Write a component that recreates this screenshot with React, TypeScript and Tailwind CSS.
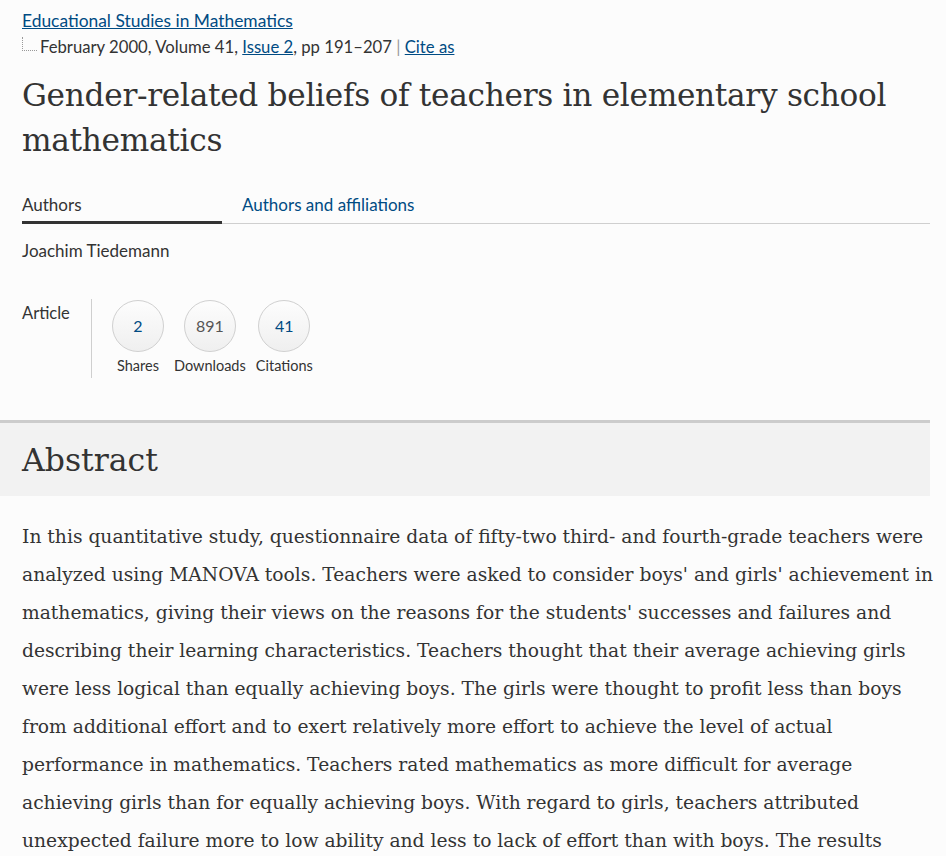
import React from "react";

const sans = "font-['Source_Sans_Pro','Lato','Liberation_Sans',sans-serif]";
const heading = "font-['DejaVu_Serif',serif]";

interface MetricProps {
  value: string;
  label: string;
  link?: boolean;
}

const Metric: React.FC<MetricProps> = ({ value, label, link }) => {
  return (
    <div className="flex flex-col items-center">
      <div
        className={`flex h-[52px] w-[52px] items-center justify-center rounded-full border border-[#d0d0d0] bg-gradient-to-b from-[#fdfdfd] to-[#efefef] text-[16px] ${
          link ? "text-[#004b83]" : "text-[#555]"
        }`}
      >
        {value}
      </div>
      <div className="mt-[5px] text-[14.5px] leading-[18px] text-[#333]">{label}</div>
    </div>
  );
};

const lines = [
  "In this quantitative study, questionnaire data of fifty-two third- and fourth-grade teachers were",
  "analyzed using MANOVA tools. Teachers were asked to consider boys' and girls' achievement in",
  "mathematics, giving their views on the reasons for the students' successes and failures and",
  "describing their learning characteristics. Teachers thought that their average achieving girls",
  "were less logical than equally achieving boys. The girls were thought to profit less than boys",
  "from additional effort and to exert relatively more effort to achieve the level of actual",
  "performance in mathematics. Teachers rated mathematics as more difficult for average",
  "achieving girls than for equally achieving boys. With regard to girls, teachers attributed",
  "unexpected failure more to low ability and less to lack of effort than with boys. The results",
  "suggest that teachers' beliefs differ with regard to gender.",
];

export default function App() {
  return (
    <div className={`min-h-[856px] w-[946px] bg-[#fcfcfc] text-[#333] ${sans}`}>
      <div className="w-[930px]">
        <div className="pl-[22px] pt-[9px]">
          <a href="#" className="text-[17.4px] leading-[24px] text-[#004b83] underline">
            Educational Studies in Mathematics
          </a>
          <div className="mt-[3px] flex items-center text-[16.7px] leading-[22px] text-[#333]">
            <span className="mr-[3px] mb-[6px] inline-block h-[14px] w-[15px] border-b border-l border-dotted border-[#999]" />
            <span>
              February 2000, Volume 41,{" "}
              <a href="#" className="text-[#004b83] underline">
                Issue 2
              </a>
              , pp 191–207 <span className="text-[#999]">|</span>{" "}
              <a href="#" className="text-[#004b83] underline">
                Cite as
              </a>
            </span>
          </div>

          <h1 className={`mt-[15px] text-[31.2px] leading-[45px] tracking-[-0.3px] text-[#333] ${heading}`}>
            Gender-related beliefs of teachers in elementary school
            <br />
            mathematics
          </h1>

          <div className="mt-[30px] flex border-b border-[#cfcfcf]">
            <div className="-mb-px w-[200px] border-b-[3px] border-[#333] pb-[4px] text-[17px] leading-[24px] text-[#333]">
              Authors
            </div>
            <div className="ml-[20px] text-[17px] leading-[24px] text-[#004b83]">Authors and affiliations</div>
          </div>

          <div className="mt-[15px] text-[17px] leading-[24px] text-[#333]">Joachim Tiedemann</div>

          <div className="mt-[36px] flex">
            <div className="w-[69px] pt-[3px] text-[16.5px] leading-[22px] text-[#333]">Article</div>
            <div className="flex gap-[10px] border-l border-[#cfcfcf] pb-[3px] pl-[20px] pt-[1px]">
              <Metric value="2" label="Shares" link />
              <Metric value="891" label="Downloads" />
              <Metric value="41" label="Citations" link />
            </div>
          </div>
        </div>

        <div className="mt-[42px] border-t-[3px] border-[#cccccc] bg-[#f2f2f2] pl-[22px] pt-[16px] pb-[15px]">
          <h2 className={`text-[31.5px] leading-[42px] text-[#333] ${heading}`}>Abstract</h2>
        </div>

        <p className="pl-[22px] pt-[22px] font-['DejaVu_Serif',serif] text-[18.7px] leading-[38px] text-[#333]">
          {lines.map((l, i) => (
            <span key={i} className="block whitespace-nowrap">
              {l}
            </span>
          ))}
        </p>
      </div>
    </div>
  );
}
